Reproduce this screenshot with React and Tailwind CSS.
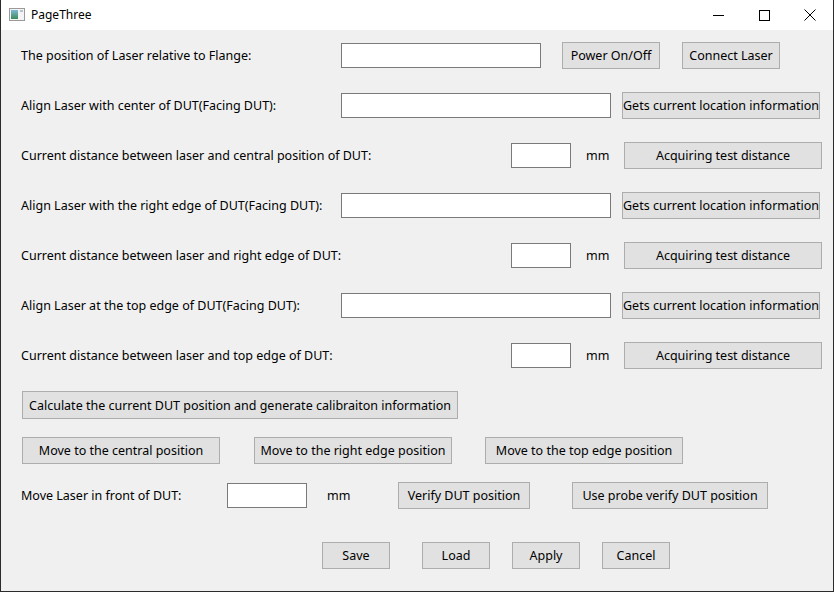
import React from "react";

const font = { fontFamily: '"Noto Sans", "Liberation Sans", sans-serif' };

const Btn = ({ w, children, className = "" }) => (
    <button
        className={`h-[27px] shrink-0 whitespace-nowrap border border-[#adadad] bg-[#e1e1e1] px-0 pt-[2px] text-[12.5px] leading-none text-black ${w} ${className}`}
    >
        {children}
    </button>
);

const Field = ({ w, className = "" }) => (
    <input
        className={`h-[25px] shrink-0 border border-[#7a7a7a] bg-white outline-none ${w} ${className}`}
    />
);

const Label = ({ w, children }) => (
    <span className={`shrink-0 pt-[2px] text-[12.5px] text-black whitespace-nowrap ${w}`}>{children}</span>
);

// rangée : libellé + champ long + bouton d'information
const LocationRow = ({ label }) => (
    <div className="flex h-[50px] items-center pl-[20px]">
        <Label w="w-[320px]">{label}</Label>
        <Field w="w-[270px]" />
        <Btn w="w-[198px]" className="ml-[11px]">Gets current location information</Btn>
    </div>
);

// rangée : libellé + champ court + mm + bouton distance
const DistanceRow = ({ label }) => (
    <div className="flex h-[50px] items-center pl-[20px]">
        <Label w="w-[490px]">{label}</Label>
        <Field w="w-[60px]" />
        <span className="ml-[15px] w-[38px] pt-[2px] text-[12.5px] text-black">mm</span>
        <Btn w="w-[198px]">Acquiring test distance</Btn>
    </div>
);

export default function App() {
    return (
        <div
            style={font}
            className="flex h-[592px] w-[834px] flex-col overflow-hidden border-x border-b border-[#2b2b2b] bg-[#f0f0f0]"
        >
            {/* Barre de titre */}
            <div className="flex h-[30px] shrink-0 items-center bg-white">
                <svg width="16" height="14" viewBox="0 0 16 14" className="ml-[8px]">
                    <defs>
                        <linearGradient id="g" x1="0" y1="0" x2="0" y2="1">
                            <stop offset="0" stopColor="#7fb8d8" />
                            <stop offset="1" stopColor="#3d8a5a" />
                        </linearGradient>
                    </defs>
                    <rect x="0.5" y="0.5" width="15" height="12" fill="#f4f4f4" stroke="#9a9a9a" />
                    <rect x="2" y="2" width="7" height="9" fill="url(#g)" />
                    <rect x="11" y="2" width="3" height="2" fill="#b8c4cc" />
                </svg>
                <span className="ml-[6px] text-[12px] text-black">PageThree</span>
                <div className="ml-auto flex h-full items-center">
                    <div className="flex h-full w-[46px] items-center justify-center">
                        <svg width="11" height="11" viewBox="0 0 11 11">
                            <path d="M0 5.5H11" stroke="#000" strokeWidth="1" />
                        </svg>
                    </div>
                    <div className="flex h-full w-[46px] items-center justify-center">
                        <svg width="11" height="11" viewBox="0 0 11 11">
                            <rect x="0.5" y="0.5" width="10" height="10" fill="none" stroke="#000" />
                        </svg>
                    </div>
                    <div className="flex h-full w-[46px] items-center justify-center">
                        <svg width="12" height="12" viewBox="0 0 12 12">
                            <path d="M0.5 0.5L11.5 11.5M11.5 0.5L0.5 11.5" stroke="#000" strokeWidth="1" />
                        </svg>
                    </div>
                </div>
            </div>

            {/* Contenu */}
            <div className="flex h-[50px] items-center pl-[20px]">
                <Label w="w-[320px]">The position of Laser relative to Flange:</Label>
                <Field w="w-[200px]" />
                <Btn w="w-[98px]" className="ml-[21px]">Power On/Off</Btn>
                <Btn w="w-[98px]" className="ml-[22px]">Connect Laser</Btn>
            </div>
            <LocationRow label="Align Laser with center of DUT(Facing DUT):" />
            <DistanceRow label="Current distance between laser and central position of DUT:" />
            <LocationRow label="Align Laser with the right edge of DUT(Facing DUT):" />
            <DistanceRow label="Current distance between laser and right edge of DUT:" />
            <LocationRow label="Align Laser at the top edge of DUT(Facing DUT):" />
            <DistanceRow label="Current distance between laser and top edge of DUT:" />

            <div className="flex h-[50px] items-center pl-[21px]">
                <Btn w="w-[436px]" className="h-[28px]">
                    Calculate the current DUT position and generate calibraiton information
                </Btn>
            </div>

            <div className="flex h-[40px] items-center pl-[21px]">
                <Btn w="w-[198px]">Move to the central position</Btn>
                <Btn w="w-[198px]" className="ml-[34px]">Move to the right edge position</Btn>
                <Btn w="w-[198px]" className="ml-[33px]">Move to the top edge position</Btn>
            </div>

            <div className="flex h-[50px] items-center pl-[20px]">
                <Label w="w-[206px]">Move Laser in front of DUT:</Label>
                <Field w="w-[80px]" />
                <span className="ml-[20px] w-[71px] pt-[2px] text-[12.5px] text-black">mm</span>
                <Btn w="w-[132px]">Verify DUT position</Btn>
                <Btn w="w-[196px]" className="ml-[42px]">Use probe verify DUT position</Btn>
            </div>

            <div className="mt-[10px] flex h-[50px] items-center pl-[321px]">
                <Btn w="w-[68px]">Save</Btn>
                <Btn w="w-[68px]" className="ml-[32px]">Load</Btn>
                <Btn w="w-[68px]" className="ml-[22px]">Apply</Btn>
                <Btn w="w-[68px]" className="ml-[22px]">Cancel</Btn>
            </div>
        </div>
    );
}
